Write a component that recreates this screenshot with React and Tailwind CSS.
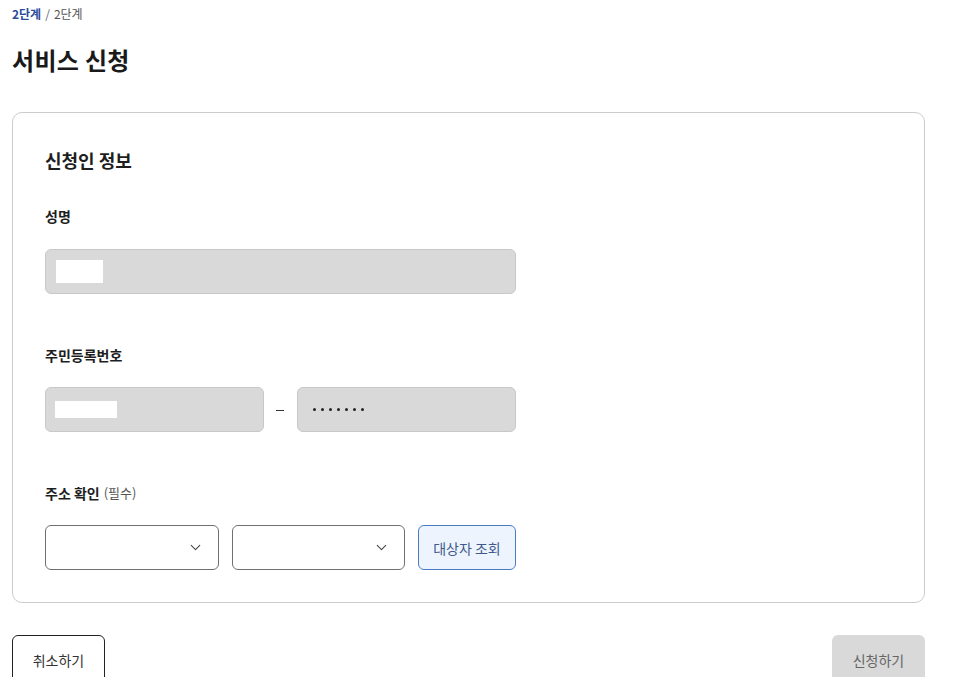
import React from "react";
import { ChevronDown } from "lucide-react";

const font = { fontFamily: '"Noto Sans CJK KR", "Noto Sans", sans-serif' };

const Select = () => (
  <div className="flex items-center justify-end h-[45px] border border-[#707070] rounded-[6px] bg-white pr-[14px]">
    <ChevronDown size={17} strokeWidth={1.5} className="text-[#444]" />
  </div>
);

const App = () => {
  return (
    <div className="px-3 pt-[5px] text-[#1e1e1e] bg-white min-h-[677px]" style={font}>
      <div className="text-xs leading-[18px]">
        <span className="font-bold text-[#2a4d9b]">2단계</span>
        <span className="text-[#666] mx-1">/</span>
        <span className="text-[#555]">2단계</span>
      </div>
      <h1 className="mt-[21px] text-2xl leading-8 font-bold text-[#1a1a1a] tracking-[0.3px]">서비스 신청</h1>

      <div className="mt-9 w-[913px] border border-[#cccccc] rounded-[10px] px-8 pt-[34px] pb-8">
        <h2 className="text-lg leading-[26px] font-bold">신청인 정보</h2>

        <div className="mt-[33px] text-sm leading-5 font-bold">성명</div>
        <div className="mt-[23px] w-[471px] h-[45px] bg-[#d9d9d9] border border-[#c8c8c8] rounded-[6px] flex items-center pl-[10px]">
          <div className="w-[47px] h-[23px] bg-white" />
        </div>

        <div className="mt-[51px] text-sm leading-5 font-bold">주민등록번호</div>
        <div className="mt-[22px] flex items-center w-[471px]">
          <div className="w-[219px] h-[45px] bg-[#d9d9d9] border border-[#c8c8c8] rounded-[6px] flex items-center pl-[9px]">
            <div className="w-[62px] h-[17px] bg-white" />
          </div>
          <div className="flex-1 flex justify-center pr-[2px]">
            <div className="w-[8px] h-px bg-[#333] mt-[2px]" />
          </div>
          <div className="w-[219px] h-[45px] bg-[#d9d9d9] border border-[#c8c8c8] rounded-[6px] flex items-center gap-[5px] pl-[15px]">
            {[0, 1, 2, 3, 4, 5, 6].map((i) => (
              <span key={i} className="w-[3px] h-[3px] rounded-full bg-[#222]" />
            ))}
          </div>
        </div>

        <div className="mt-[51px] h-5 flex items-center gap-1 text-sm leading-5">
          <span className="font-bold">주소 확인</span>
          <span className="text-[13px] leading-5 text-[#555]">(필수)</span>
        </div>
        <div className="mt-[22px] grid grid-cols-[174px_173px_98px] gap-[13px]">
          <Select />
          <Select />
          <button className="h-[45px] bg-[#eef4fd] border border-[#4a7cc2] rounded-[6px] text-sm text-[#3c5a8c]">
            대상자 조회
          </button>
        </div>
      </div>

      <div className="mt-8 w-[913px] flex justify-between">
        <button className="w-[93px] h-[50px] border border-[#222] rounded-[6px] bg-white text-sm text-[#333]">
          취소하기
        </button>
        <button className="w-[93px] h-[50px] rounded-[6px] bg-[#d9d9d9] text-sm text-[#666]">
          신청하기
        </button>
      </div>
    </div>
  );
};

export default App;
